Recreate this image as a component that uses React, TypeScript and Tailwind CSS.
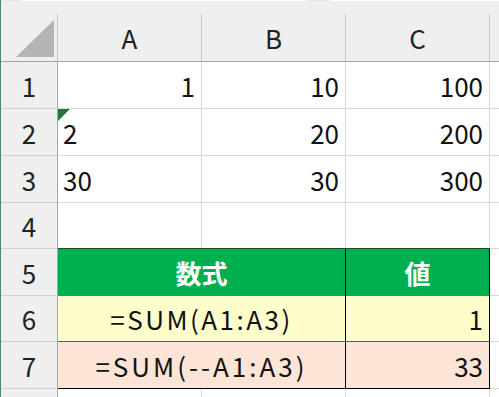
import React from "react";

const font = { fontFamily: '"Noto Sans CJK JP", "Noto Sans", sans-serif' };

function RowHead({ n, h, last }: { n: string; h: string; last?: boolean }) {
  return (
    <div
      className={`w-[57px] ${h} shrink-0 bg-[#efefef] border-r border-r-[#a6a6a6] ${
        last ? "" : "border-b border-b-[#cfcfcf]"
      } flex items-center justify-center text-[26px] text-[#222]`}
    >
      {n}
    </div>
  );
}

function Cell({
  children,
  align = "right",
}: {
  children?: React.ReactNode;
  align?: "left" | "right";
}) {
  return (
    <div
      className={`w-[144px] shrink-0 h-full border-r border-b border-[#dadada] flex items-center ${
        align === "right" ? "justify-end pr-[6px]" : "justify-start pl-[5px]"
      } text-[26px] text-[#111]`}
    >
      {children}
    </div>
  );
}

function DCell() {
  return <div className="flex-1 h-full border-b border-[#dadada]" />;
}

export default function App() {
  return (
    <div
      className="w-[499px] h-[397px] overflow-hidden bg-white flex"
      style={font}
    >
      {/* left window edge */}
      <div className="w-[1px] h-full bg-[#4f8a68] shrink-0" />
      <div className="flex-1 flex flex-col">
        {/* top strip */}
        <div className="h-[1px] flex shrink-0">
          <div className="w-[21px] bg-[#e6e6e6]" />
          <div className="w-[283px] bg-white" />
          <div className="w-[25px] bg-[#e6e6e6]" />
          <div className="flex-1 bg-white" />
        </div>
        {/* column headers */}
        <div className="h-[61px] flex shrink-0 bg-[#efefef] border-b border-b-[#a6a6a6]">
          <div className="w-[57px] shrink-0 flex flex-col">
            <div className="h-[13px]" />
            <div className="flex-1 border-r border-r-[#c4c4c4] relative">
              <svg
                className="absolute left-[15px] top-[6px]"
                width="39"
                height="38"
                viewBox="0 0 39 38"
              >
                <polygon points="0,37 38,37 38,0" fill="#b4b4b4" />
              </svg>
            </div>
          </div>
          {["A", "B", "C"].map((c) => (
            <div key={c} className="w-[144px] shrink-0 flex flex-col">
              <div className="h-[13px]" />
              <div className="flex-1 border-r border-r-[#c4c4c4] flex items-center justify-center text-[26px] text-[#222]">
                {c}
              </div>
            </div>
          ))}
          <div className="flex-1" />
        </div>

        {/* row 1 */}
        <div className="h-[47px] flex shrink-0">
          <RowHead n="1" h="h-[47px]" />
          <Cell>1</Cell>
          <Cell>10</Cell>
          <Cell>100</Cell>
          <DCell />
        </div>
        {/* row 2 */}
        <div className="h-[47px] flex shrink-0">
          <RowHead n="2" h="h-[47px]" />
          <div className="w-[144px] shrink-0 h-full border-r border-b border-[#dadada] flex items-center justify-start pl-[5px] text-[26px] text-[#111] relative">
            <svg
              className="absolute left-0 top-0"
              width="12"
              height="12"
              viewBox="0 0 12 12"
            >
              <polygon points="0,0 12,0 0,12" fill="#1f7a33" />
            </svg>
            2
          </div>
          <Cell>20</Cell>
          <Cell>200</Cell>
          <DCell />
        </div>
        {/* row 3 */}
        <div className="h-[47px] flex shrink-0">
          <RowHead n="3" h="h-[47px]" />
          <Cell align="left">30</Cell>
          <Cell>30</Cell>
          <Cell>300</Cell>
          <DCell />
        </div>
        {/* row 4 */}
        <div className="h-[46px] flex shrink-0">
          <RowHead n="4" h="h-[46px]" />
          <div className="w-[432px] shrink-0 h-full flex border-b border-b-[#1c4a2a]">
            <div className="w-[144px] h-full border-r border-[#dadada]" />
            <div className="w-[144px] h-full border-r border-[#dadada]" />
            <div className="w-[144px] h-full border-r border-[#dadada]" />
          </div>
          <DCell />
        </div>
        {/* row 5 */}
        <div className="h-[47px] flex shrink-0">
          <RowHead n="5" h="h-[47px]" />
          <div className="w-[288px] shrink-0 h-full bg-[#00b050] border-r border-r-black flex items-center justify-center text-[26px] font-bold text-white">
            数式
          </div>
          <div className="w-[144px] shrink-0 h-full bg-[#00b050] border-r border-r-black flex items-center justify-center text-[26px] font-bold text-white">
            値
          </div>
          <DCell />
        </div>
        {/* row 6 */}
        <div className="h-[46px] flex shrink-0">
          <RowHead n="6" h="h-[46px]" />
          <div className="w-[288px] shrink-0 h-full bg-[#ffffcc] border-r border-r-black border-b border-b-[#5a5a5a] flex items-center justify-center text-[26px] tracking-[2.5px] text-[#111]">
            =SUM(A1:A3)
          </div>
          <div className="w-[144px] shrink-0 h-full bg-[#ffffcc] border-r border-r-black border-b border-b-[#5a5a5a] flex items-center justify-end pr-[6px] text-[26px] text-[#111]">
            1
          </div>
          <DCell />
        </div>
        {/* row 7 */}
        <div className="h-[47px] flex shrink-0">
          <RowHead n="7" h="h-[47px]" />
          <div className="w-[288px] shrink-0 h-full bg-[#fce4d6] border-r border-r-black border-b border-b-black flex items-center justify-center text-[26px] tracking-[3px] text-[#111]">
            =SUM(--A1:A3)
          </div>
          <div className="w-[144px] shrink-0 h-full bg-[#fce4d6] border-r border-r-black border-b border-b-black flex items-center justify-end pr-[6px] text-[26px] text-[#111]">
            33
          </div>
          <DCell />
        </div>
        {/* row 8 partial */}
        <div className="flex-1 flex">
          <div className="w-[57px] shrink-0 bg-[#efefef] border-r border-r-[#a6a6a6]" />
          <div className="w-[144px] shrink-0 border-r border-[#dadada]" />
          <div className="w-[144px] shrink-0 border-r border-[#dadada]" />
          <div className="w-[144px] shrink-0 border-r border-[#dadada]" />
          <div className="flex-1" />
        </div>
      </div>
    </div>
  );
}
